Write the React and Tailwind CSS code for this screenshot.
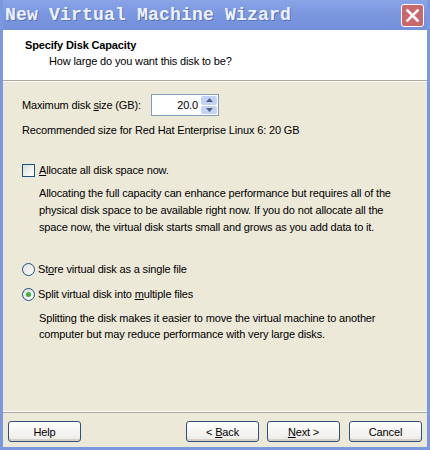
import React from 'react';

const ui = { fontFamily: 'Tahoma, "Liberation Sans", Arial, sans-serif' };

function XpButton({ children, className = '' }) {
  return (
    <button
      type="button"
      className={`h-[21px] w-[73px] rounded-[3px] border border-[#2f4f80] bg-gradient-to-b from-white to-[#ecebe6] text-[11px] tracking-[-0.15px] text-black shadow-[inset_0_-2px_0_#d6d0c5] ${className}`}
    >
      {children}
    </button>
  );
}

function Checkbox() {
  return (
    <span className="inline-block h-[13px] w-[13px] shrink-0 border border-[#1c5180] bg-gradient-to-br from-[#dcdcd7] to-white" />
  );
}

function Radio({ checked }) {
  return (
    <span className="flex h-[13px] w-[13px] shrink-0 items-center justify-center rounded-full border border-[#1c5180] bg-gradient-to-br from-[#dcdcd7] to-white">
      {checked && <span className="h-[5px] w-[5px] rounded-full bg-[#3fb03f]" />}
    </span>
  );
}

export default function App() {
  return (
    <div className="flex h-[450px] w-[430px] flex-col bg-[#7b97de] px-[3px] pb-[3px]" style={ui}>
      {/* title bar */}
      <div className="flex h-[30px] shrink-0 items-center justify-between bg-gradient-to-b from-[#8aa4e6] via-[#7a96df] to-[#7590da] pl-[2px] pr-[3px]">
        <span
          className="text-[18px] font-bold leading-none tracking-[0.2px] text-[#eef2fc] [text-shadow:1px_1px_0_#5a72b8]"
          style={{ fontFamily: '"Liberation Mono", "Courier New", monospace' }}
        >
          New Virtual Machine Wizard
        </span>
        <span className="flex h-[23px] w-[23px] items-center justify-center rounded-[3px] border border-white bg-[#c8676c]">
          <svg width="15" height="15" viewBox="0 0 15 15">
            <path d="M2.5 2.5 L12.5 12.5 M12.5 2.5 L2.5 12.5" stroke="#fff" strokeWidth="2.6" strokeLinecap="square" />
          </svg>
        </span>
      </div>

      {/* header */}
      <div className="h-[51px] shrink-0 border-b border-[#aca899] bg-white pl-[22px] pt-[8px] text-[11px] tracking-[-0.15px]">
        <div className="font-bold leading-[15px] text-black">Specify Disk Capacity</div>
        <div className="pl-[24px] leading-[16px] text-black">How large do you want this disk to be?</div>
      </div>

      {/* body */}
      <div className="flex flex-1 flex-col bg-[#ece9d8] text-[11px] leading-[16px] tracking-[-0.15px] text-black">
        <div className="border-t border-white px-[19px] pt-[12px]">
          <div className="flex items-center">
            <span className="w-[129px] whitespace-nowrap">
              Maximum disk <u>s</u>ize (GB):
            </span>
            <div className="flex h-[22px] w-[68px] items-center border border-[#7f9db9] bg-white pl-[2px] pr-[1px]">
              <span className="flex-1 pr-[3px] text-right">20.0</span>
              <div className="flex h-[18px] w-[16px] flex-col gap-px">
                <span className="flex flex-1 items-center justify-center rounded-[2px] bg-[#c3d3f5]">
                  <svg width="7" height="4" viewBox="0 0 7 4"><path d="M0 4 L3.5 0 L7 4 Z" fill="#4d6185" /></svg>
                </span>
                <span className="flex flex-1 items-center justify-center rounded-[2px] bg-[#c3d3f5]">
                  <svg width="7" height="4" viewBox="0 0 7 4"><path d="M0 0 L3.5 4 L7 0 Z" fill="#4d6185" /></svg>
                </span>
              </div>
            </div>
          </div>
          <div className="mt-[6px]">Recommended size for Red Hat Enterprise Linux 6: 20 GB</div>

          <div className="mt-[24px] flex items-center gap-[4px]">
            <Checkbox />
            <span>
              <u>A</u>llocate all disk space now.
            </span>
          </div>
          <p className="mt-[7px] whitespace-nowrap pl-[17px] leading-[17px]">
            Allocating the full capacity can enhance performance but requires all of the
            <br />
            physical disk space to be available right now. If you do not allocate all the
            <br />
            space now, the virtual disk starts small and grows as you add data to it.
          </p>

          <div className="mt-[25px] flex items-center gap-[3px]">
            <Radio />
            <span>
              St<u>o</u>re virtual disk as a single file
            </span>
          </div>
          <div className="mt-[9px] flex items-center gap-[3px]">
            <Radio checked />
            <span>
              Split virtual disk into <u>m</u>ultiple files
            </span>
          </div>
          <p className="mt-[8px] whitespace-nowrap pl-[17px] leading-[16px]">
            Splitting the disk makes it easier to move the virtual machine to another
            <br />
            computer but may reduce performance with very large disks.
          </p>
        </div>

        <div className="mt-auto border-b border-white" />
        <div className="flex items-center border-t border-[#aca899] px-[5px] pb-[5px] pt-[8px]">
          <XpButton>Help</XpButton>
          <div className="flex-1" />
          <XpButton>
            &lt; <u>B</u>ack
          </XpButton>
          <XpButton className="ml-[8px]">
            <u>N</u>ext &gt;
          </XpButton>
          <XpButton className="ml-[9px]">Cancel</XpButton>
        </div>
      </div>
    </div>
  );
}
